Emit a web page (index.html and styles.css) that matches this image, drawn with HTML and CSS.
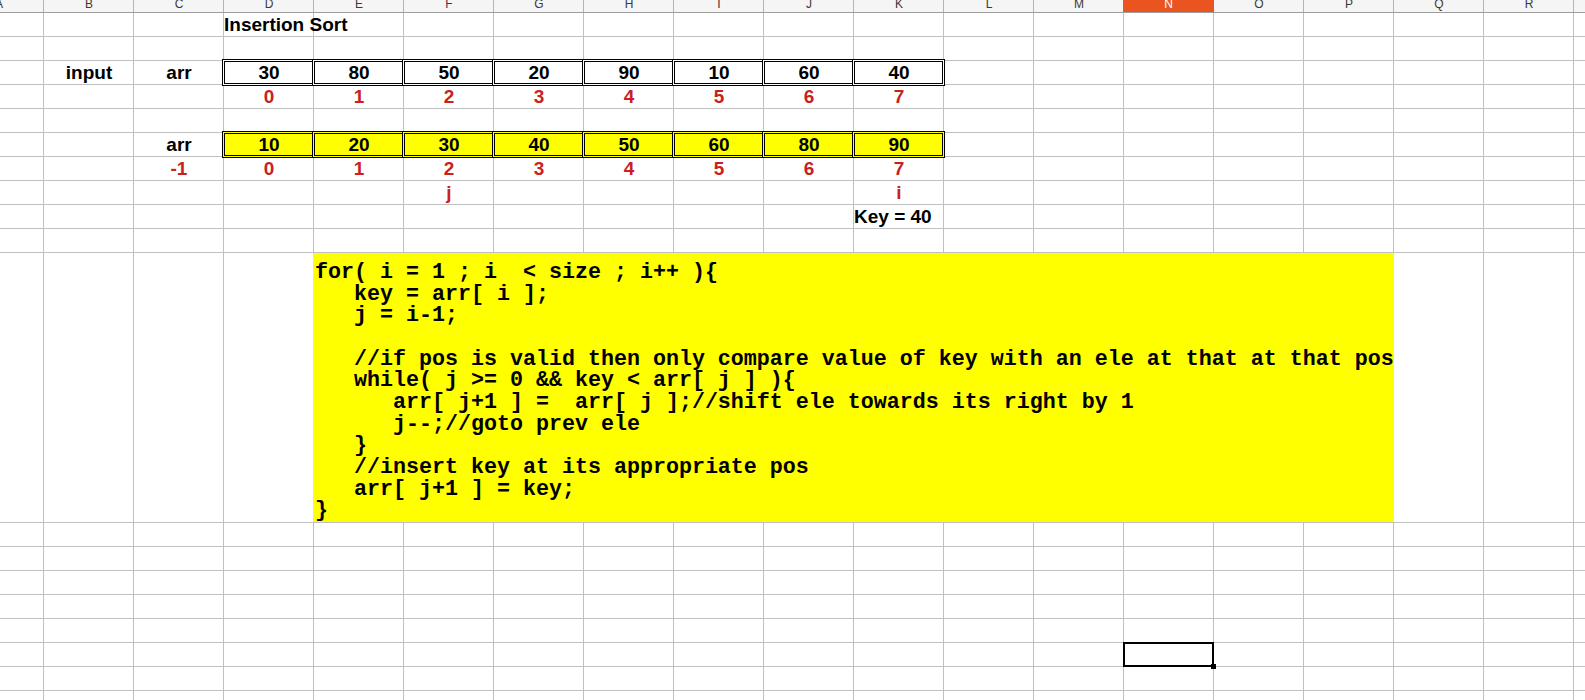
FILE: index.html
```html
<!DOCTYPE html>
<html>
<head>
<meta charset="utf-8">
<title>Insertion Sort</title>
<link rel="stylesheet" href="styles.css">
</head>
<body>
<div class="sheet">
  <div class="row head">
    <div class="hc">A</div><div class="hc">B</div><div class="hc">C</div><div class="hc">D</div><div class="hc">E</div><div class="hc">F</div><div class="hc">G</div><div class="hc">H</div><div class="hc">I</div><div class="hc">J</div><div class="hc">K</div><div class="hc">L</div><div class="hc">M</div><div class="hc on">N</div><div class="hc">O</div><div class="hc">P</div><div class="hc">Q</div><div class="hc">R</div><div class="hc">S</div>
  </div>
  <div class="row">
    <div class="cell left c-d">Insertion Sort</div>
  </div>
  <div class="row"></div>
  <div class="row">
    <div class="cell c-b">input</div>
    <div class="cell c-c">arr</div>
    <div class="cell box c-d">30</div>
    <div class="cell box c-e">80</div>
    <div class="cell box c-f">50</div>
    <div class="cell box c-g">20</div>
    <div class="cell box c-h">90</div>
    <div class="cell box c-i">10</div>
    <div class="cell box c-j">60</div>
    <div class="cell box c-k">40</div>
  </div>
  <div class="row">
    <div class="cell red c-d">0</div>
    <div class="cell red c-e">1</div>
    <div class="cell red c-f">2</div>
    <div class="cell red c-g">3</div>
    <div class="cell red c-h">4</div>
    <div class="cell red c-i">5</div>
    <div class="cell red c-j">6</div>
    <div class="cell red c-k">7</div>
  </div>
  <div class="row"></div>
  <div class="row">
    <div class="cell c-c">arr</div>
    <div class="cell box yel c-d">10</div>
    <div class="cell box yel c-e">20</div>
    <div class="cell box yel c-f">30</div>
    <div class="cell box yel c-g">40</div>
    <div class="cell box yel c-h">50</div>
    <div class="cell box yel c-i">60</div>
    <div class="cell box yel c-j">80</div>
    <div class="cell box yel c-k">90</div>
  </div>
  <div class="row">
    <div class="cell red c-c">-1</div>
    <div class="cell red c-d">0</div>
    <div class="cell red c-e">1</div>
    <div class="cell red c-f">2</div>
    <div class="cell red c-g">3</div>
    <div class="cell red c-h">4</div>
    <div class="cell red c-i">5</div>
    <div class="cell red c-j">6</div>
    <div class="cell red c-k">7</div>
  </div>
  <div class="row">
    <div class="cell red c-f">j</div>
    <div class="cell red c-k">i</div>
  </div>
  <div class="row">
    <div class="cell left c-k">Key = 40</div>
  </div>
  <div class="row"></div>
  <div class="row tall">
    <div class="code"><pre class="code-text">for( i = 1 ; i  &lt; size ; i++ ){
   key = arr[ i ];
   j = i-1;

   //if pos is valid then only compare value of key with an ele at that at that pos
   while( j &gt;= 0 &amp;&amp; key &lt; arr[ j ] ){
      arr[ j+1 ] =  arr[ j ];//shift ele towards its right by 1
      j--;//goto prev ele
   }
   //insert key at its appropriate pos
   arr[ j+1 ] = key;
}</pre></div>
  </div>
  <div class="row"></div>
  <div class="row"></div>
  <div class="row"></div>
  <div class="row"></div>
  <div class="row"></div>
  <div class="row">
    <div class="cell sel c-n"><span class="handle"></span></div>
  </div>
  <div class="row"></div>
  <div class="row"></div>
</div>
</body>
</html>
```

FILE: styles.css
```css
html, body {
  margin: 0;
  padding: 0;
  overflow: hidden;
  background: #ffffff;
}

body {
  width: 1585px;
  height: 700px;
}

.sheet {
  margin-left: -46px;
  width: 1710px;
  font-family: "Liberation Sans", Arial, sans-serif;
}

.row {
  display: grid;
  grid-template-columns: repeat(19, 90px);
  height: 24px;
  box-sizing: border-box;
  border-bottom: 1px solid #c0c0c0;
  background-image: linear-gradient(to right, transparent 89px, #c0c0c0 89px);
  background-size: 90px 100%;
  background-repeat: repeat-x;
}

.row.head {
  height: 13px;
  background-color: #f5f5f5;
  border-bottom-color: #9c9c9c;
  background-image: linear-gradient(to right, transparent 89px, #b4b4b4 89px);
  overflow: hidden;
}

.row.tall {
  height: 270px;
}

.hc {
  display: flex;
  justify-content: center;
  align-items: flex-start;
  font-size: 12px;
  line-height: 9px;
  color: #3a3a3a;
}

.hc.on {
  margin-left: -1px;
  background: #e95420;
  color: #ffffff;
}

.cell {
  position: relative;
  display: flex;
  align-items: flex-end;
  justify-content: center;
  font-weight: bold;
  font-size: 19px;
  line-height: 22px;
  color: #000000;
  white-space: nowrap;
}

.cell.left {
  justify-content: flex-start;
}

.cell.red {
  color: #c9211e;
}

.box {
  background: #ffffff;
}

.box::after {
  content: "";
  position: absolute;
  left: -2px;
  top: -2px;
  right: -1px;
  bottom: -2px;
  border: 1px solid #000000;
  box-shadow: inset 0 0 0 1px #ffffff, inset 0 0 0 2px #000000;
}

.box.yel {
  background: #ffff00;
}

.box.yel::after {
  box-shadow: inset 0 0 0 1px #ffff00, inset 0 0 0 2px #000000;
}

.sel::after {
  content: "";
  position: absolute;
  left: -1px;
  top: -1px;
  right: 0;
  bottom: -1px;
  border: 2px solid #000000;
}

.handle {
  position: absolute;
  right: -2px;
  bottom: -3px;
  width: 5px;
  height: 5px;
  background: #000000;
  z-index: 1;
}

.code {
  grid-column: 5 / span 12;
  margin-left: -1px;
  background: #ffff00;
  display: flex;
  flex-direction: column;
  justify-content: flex-end;
  padding-left: 2px;
  overflow: hidden;
}

.code-text {
  margin: 0;
  font-family: "Liberation Mono", "Courier New", monospace;
  font-weight: bold;
  font-size: 21.67px;
  line-height: 21.67px;
  color: #000000;
  white-space: pre;
}

.c-a { grid-column: 1; }
.c-b { grid-column: 2; }
.c-c { grid-column: 3; }
.c-d { grid-column: 4; }
.c-e { grid-column: 5; }
.c-f { grid-column: 6; }
.c-g { grid-column: 7; }
.c-h { grid-column: 8; }
.c-i { grid-column: 9; }
.c-j { grid-column: 10; }
.c-k { grid-column: 11; }
.c-l { grid-column: 12; }
.c-m { grid-column: 13; }
.c-n { grid-column: 14; }
```
